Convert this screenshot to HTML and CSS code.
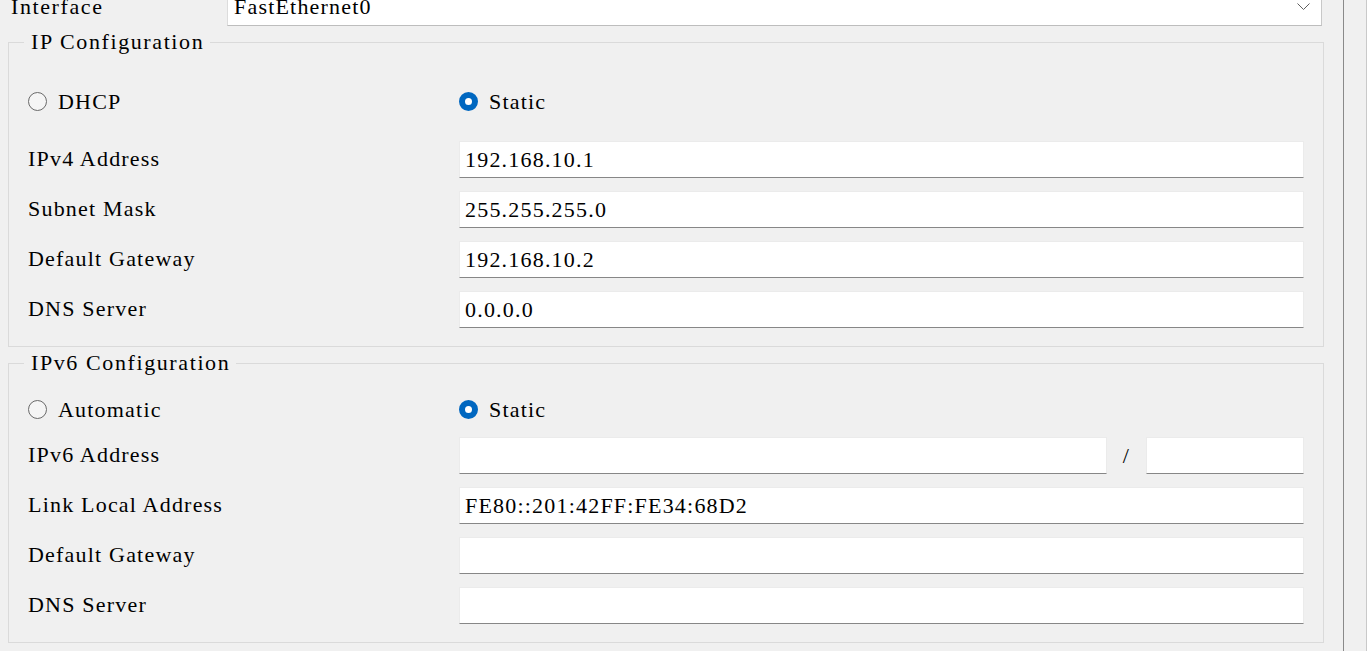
FILE: index.html
```html
<!DOCTYPE html>
<html lang="en">
<head>
<meta charset="utf-8">
<title>Interface configuration</title>
<link rel="stylesheet" href="styles.css">
</head>
<body>
<div class="window">
  <div class="content">
    <div class="iface-row">
      <span class="iface-label">Interface</span>
      <div class="select">
        <span class="select-value">FastEthernet0</span>
        <svg class="chevron" width="13" height="8" viewBox="0 0 13 8"><polyline points="0.5,0.5 6.5,6.5 12.5,0.5" fill="none" stroke="#5f5f5f" stroke-width="1"/></svg>
      </div>
    </div>

    <fieldset class="group group-v4">
      <legend class="legend">IP Configuration</legend>
      <div class="mode-row mode-v4">
        <label class="radio"><span class="dot"></span><span>DHCP</span></label>
        <label class="radio"><span class="dot dot-on"></span><span>Static</span></label>
      </div>
      <div class="rows">
        <div class="field"><span class="label">IPv4 Address</span><div class="input">192.168.10.1</div></div>
        <div class="field"><span class="label">Subnet Mask</span><div class="input">255.255.255.0</div></div>
        <div class="field"><span class="label">Default Gateway</span><div class="input">192.168.10.2</div></div>
        <div class="field"><span class="label">DNS Server</span><div class="input">0.0.0.0</div></div>
      </div>
    </fieldset>

    <fieldset class="group group-v6">
      <legend class="legend">IPv6 Configuration</legend>
      <div class="mode-row mode-v6">
        <label class="radio"><span class="dot"></span><span>Automatic</span></label>
        <label class="radio"><span class="dot dot-on"></span><span>Static</span></label>
      </div>
      <div class="rows">
        <div class="field"><span class="label">IPv6 Address</span>
          <div class="split">
            <div class="input input-grow"></div>
            <span class="slash">/</span>
            <div class="input input-prefix"></div>
          </div>
        </div>
        <div class="field"><span class="label">Link Local Address</span><div class="input">FE80::201:42FF:FE34:68D2</div></div>
        <div class="field"><span class="label">Default Gateway</span><div class="input"></div></div>
        <div class="field"><span class="label">DNS Server</span><div class="input"></div></div>
      </div>
    </fieldset>
  </div>
  <div class="scroll-edge"></div>
</div>
</body>
</html>
```

FILE: styles.css
```css
html, body {
  margin: 0;
  padding: 0;
  background: #f0f0f0;
}

body {
  font-family: "Liberation Serif", "Noto Sans CJK SC", serif;
  font-size: 22px;
  letter-spacing: 1.2px;
  color: #000;
  overflow: hidden;
}

.window {
  display: flex;
  height: 651px;
  overflow: hidden;
}

.content {
  width: 1343px;
  box-sizing: border-box;
  padding: 0 19px 0 8px;
  flex: none;
}

.scroll-edge {
  flex: 1;
  border-left: 1px solid #8a8a8a;
  border-right: 1px solid #c9c9c9;
  background: #f0f0f0;
}

/* interface row */
.iface-row {
  display: flex;
  align-items: center;
  margin-top: -12px;
  height: 38px;
}

.iface-label {
  width: 216px;
  padding-left: 3px;
  flex: none;
  letter-spacing: 1.6px;
}

.select {
  flex: 1;
  height: 38px;
  box-sizing: border-box;
  margin-right: 2px;
  background: #fff;
  border: 1px solid #dcdcdc;
  border-bottom-color: #bdbdbd;
  border-right-color: #c8c8c8;
  display: flex;
  align-items: center;
  justify-content: space-between;
  padding: 0 11px 0 6px;
}

.chevron {
  display: block;
}

/* group boxes */
.group {
  margin: 5px 0 0 0;
  padding: 0 19px 18px 19px;
  border: 1px solid #dadada;
  min-width: 0;
}

.legend {
  margin-left: -4px;
  padding: 0 6px 0 7px;
  line-height: 22px;
  letter-spacing: 1.6px;
}

.mode-row {
  display: grid;
  grid-template-columns: 431px 1fr;
  height: 37px;
  align-items: center;
}

.mode-v4 {
  margin: 30px 0 21px 0;
}

.mode-v6 {
  margin: 17px 0 9px 0;
}

.radio {
  display: flex;
  align-items: center;
  gap: 11px;
}

.dot {
  width: 19px;
  height: 19px;
  box-sizing: border-box;
  border-radius: 50%;
  border: 1px solid #6a6a6a;
  background: #f5f5f5;
  flex: none;
}

.dot-on {
  border: 6px solid #0067c0;
  background: #fff;
}

.rows {
  display: flex;
  flex-direction: column;
  gap: 13px;
}

.field {
  display: grid;
  grid-template-columns: 431px 1fr;
  align-items: center;
  height: 37px;
}

.label {
  margin-top: -2px;
}

.input {
  height: 37px;
  box-sizing: border-box;
  background: #fff;
  border: 1px solid #ebebeb;
  border-bottom-color: #878787;
  padding-left: 5px;
  display: flex;
  align-items: center;
  white-space: nowrap;
}

.split {
  display: flex;
  align-items: center;
}

.input-grow {
  flex: 1;
}

.slash {
  width: 39px;
  text-align: center;
  flex: none;
}

.input-prefix {
  width: 158px;
  flex: none;
}
```
